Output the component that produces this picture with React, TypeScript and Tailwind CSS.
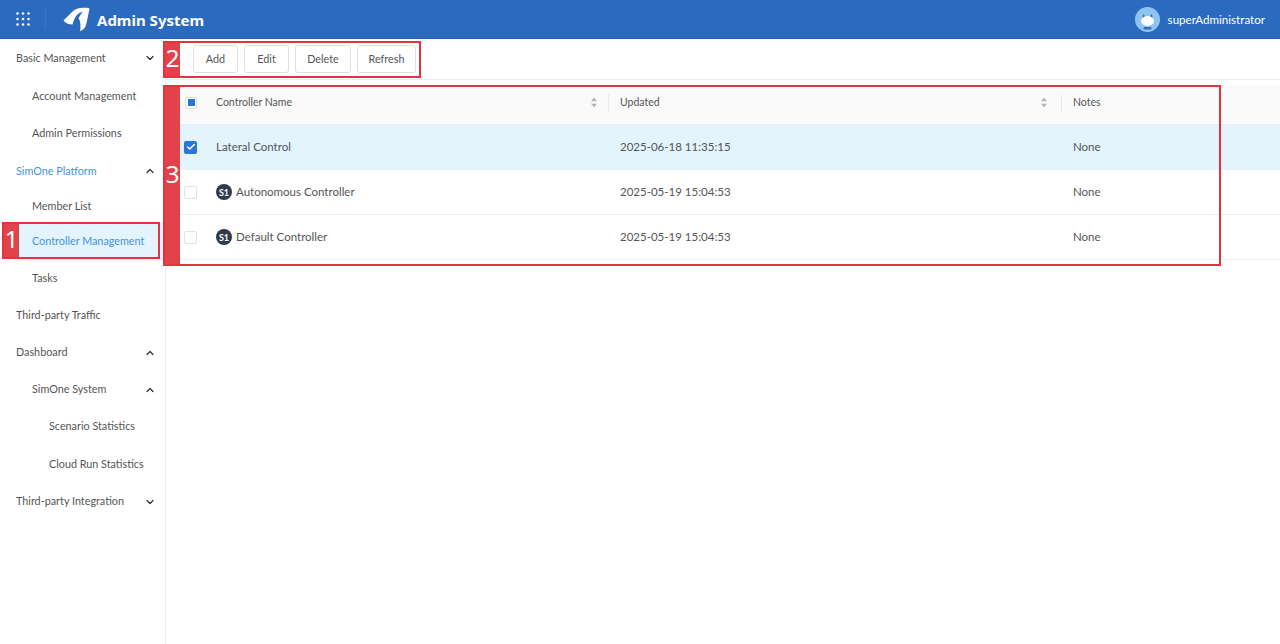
import { Check, ChevronDown, ChevronUp } from "lucide-react"

const menu = [
  { label: "Basic Management", h: "h-[38px]", pl: "pl-4", arrow: "down" },
  { label: "Account Management", h: "h-[38px]", pl: "pl-8" },
  { label: "Admin Permissions", h: "h-[37px]", pl: "pl-8" },
  { label: "SimOne Platform", h: "h-[38px]", pl: "pl-4", arrow: "up", blue: true },
  { label: "Member List", h: "h-[33px]", pl: "pl-8" },
  { label: "Controller Management", h: "h-[37px]", pl: "pl-8", active: true },
  { label: "Tasks", h: "h-[37px]", pl: "pl-8" },
  { label: "Third-party Traffic", h: "h-[37px]", pl: "pl-4" },
  { label: "Dashboard", h: "h-[37px]", pl: "pl-4", arrow: "up" },
  { label: "SimOne System", h: "h-[37px]", pl: "pl-8", arrow: "up" },
  { label: "Scenario Statistics", h: "h-[37px]", pl: "pl-[49px]" },
  { label: "Cloud Run Statistics", h: "h-[38px]", pl: "pl-[49px]" },
  { label: "Third-party Integration", h: "h-[37px]", pl: "pl-4", arrow: "down" },
]

const buttons = [
  { label: "Add", w: "w-[45px]" },
  { label: "Edit", w: "w-[45px]" },
  { label: "Delete", w: "w-[56px]" },
  { label: "Refresh", w: "w-[59px]" },
]

const rows = [
  { name: "Lateral Control", updated: "2025-06-18 11:35:15", selected: true },
  { name: "Autonomous Controller", updated: "2025-05-19 15:04:53", badge: true },
  { name: "Default Controller", updated: "2025-05-19 15:04:53", badge: true },
]

function SortIcon() {
  return (
    <svg width="8" height="11" viewBox="0 0 8 11" className="fill-[#b5b5b5]">
      <path d="M4 0.5 7 4.2H1z" />
      <path d="M4 10.5 1 6.8h6z" />
    </svg>
  )
}

function Logo() {
  return (
    <svg width="27" height="24" viewBox="0 0 27 24" className="fill-white">
      <path d="M0.5 13.5 9 5C13 1.5 17 .3 25.5 1 26.3 1.1 26.5 2 26.3 3 25 8 24.5 13 23 18 22 21 20 23.5 17 24 18 19 17.5 14 15.5 11.5 17 8 18.5 6.5 19.5 5 15 5.5 12 9 9.5 17.5 6.5 17.5 3 16.5 0.5 13.5Z" />
    </svg>
  )
}

function Avatar() {
  return (
    <div className="relative flex h-[25px] w-[25px] items-center justify-center overflow-hidden rounded-full bg-[#8fc3f2]">
      <svg width="25" height="25" viewBox="0 0 25 25">
        <path d="M8 7l2.5 2.5h4L17 7l.6 4H7.4z" className="fill-[#2f6fbd]" />
        <ellipse cx="12.5" cy="14" rx="6.5" ry="5" className="fill-white" />
        <rect x="8.5" y="20" width="8" height="2.5" rx="1" className="fill-[#2f6fbd]" />
      </svg>
    </div>
  )
}

function Annotation({ n, className }: { n: string; className: string }) {
  return (
    <div className={`pointer-events-none absolute border-2 border-[#e2343e] ${className}`}>
      <div className="absolute top-0 bottom-0 left-0 flex w-[15px] items-center justify-center bg-[#e2434b] pb-[3px] font-['Noto_Sans',sans-serif] text-[24px] leading-none text-white">
        {n}
      </div>
    </div>
  )
}

export default function App() {
  return (
    <div className="relative flex h-[644px] w-[1280px] flex-col overflow-hidden bg-white font-['Lato','Noto_Sans',sans-serif] text-[11.5px] text-[#555]">
      <header className="flex h-[39px] shrink-0 items-center justify-between border-b border-[#2560ab] bg-[#2a6bbf] pr-[15px] text-white">
        <div className="flex items-center">
          <svg width="14" height="14" viewBox="0 0 14 14" className="ml-4 fill-white">
            {[1.5, 7, 12.5].flatMap((y) =>
              [1.5, 7, 12.5].map((x) => <circle key={`${x}-${y}`} cx={x} cy={y} r="1.3" />),
            )}
          </svg>
          <div className="ml-[15px] h-[20px] w-px bg-[#3a76c4]" />
          <div className="ml-[17px] flex">
            <Logo />
          </div>
          <span className="mt-[2px] ml-[7px] font-['Noto_Sans',sans-serif] text-[15px] font-bold">Admin System</span>
        </div>
        <div className="flex items-center gap-2">
          <Avatar />
          <span className="mt-[1px] text-[11.6px]">superAdministrator</span>
        </div>
      </header>

      <div className="flex min-h-0 flex-1">
        <aside className="w-[166px] shrink-0 border-r border-[#ececec] text-[10.8px]">
          {menu.map((item) => (
            <div key={item.label} className={`flex items-center pr-[9px] ${item.h} ${item.active ? "ml-[19px] pl-[13px] bg-[#e3f4fd] text-[#3f93e4]" : item.pl} ${item.blue ? "text-[#3f93e4]" : ""}`}>
              <span className="flex-1 whitespace-nowrap">{item.label}</span>
              {item.arrow === "down" && <ChevronDown size={12} strokeWidth={2.5} className="text-[#333]" />}
              {item.arrow === "up" && <ChevronUp size={12} strokeWidth={2.5} className="text-[#333]" />}
            </div>
          ))}
        </aside>

        <main className="min-w-0 flex-1">
          <div className="flex h-[41px] items-center gap-[6px] border-b border-[#ececec] pl-[27px] text-[10.8px]">
            {buttons.map((b) => (
              <button key={b.label} className={`h-[28px] rounded-[3px] border border-[#e0e0e0] bg-white text-[#555] ${b.w}`}>
                {b.label}
              </button>
            ))}
          </div>

          <div className="mt-[5px]">
            <div className="grid h-[40px] grid-cols-[50px_393px_453px_1fr] items-center border-b border-[#ececec] bg-[#fafafa] pb-[4px] text-[10.5px]">
              <div className="pl-[19px]">
                <div className="flex h-[12px] w-[12px] items-center justify-center rounded-[2px] border border-[#e0e0e0] bg-white">
                  <div className="h-[7px] w-[7px] bg-[#2a76d8]" />
                </div>
              </div>
              <div className="flex h-[18px] items-center justify-between border-r border-[#eaeaea] pr-[10px]">
                Controller Name
                <SortIcon />
              </div>
              <div className="flex h-[18px] items-center justify-between border-r border-[#eaeaea] pr-[13px] pl-[11px]">
                Updated
                <SortIcon />
              </div>
              <div className="pl-[11px]">Notes</div>
            </div>
            {rows.map((row) => (
              <div key={row.name} className={`grid h-[45px] grid-cols-[50px_393px_453px_1fr] items-center border-b border-[#efefef] ${row.selected ? "bg-[#e3f4fd]" : ""}`}>
                <div className="pl-[18px]">
                  {row.selected ? (
                    <div className="flex h-[13px] w-[13px] items-center justify-center rounded-[2px] bg-[#2a76d8] text-white">
                      <Check size={10} strokeWidth={3.5} />
                    </div>
                  ) : (
                    <div className="h-[13px] w-[13px] rounded-[2px] border border-[#e3e3e3] bg-white" />
                  )}
                </div>
                <div className="flex items-center gap-1">
                  {row.badge && (
                    <span className="flex h-[16px] w-[16px] items-center justify-center rounded-full bg-[#2f3b4c] text-[9px] leading-none font-bold text-white">
                      S1
                    </span>
                  )}
                  {row.name}
                </div>
                <div className="pl-[11px]">{row.updated}</div>
                <div className="pl-[11px]">None</div>
              </div>
            ))}
          </div>
        </main>
      </div>

      <Annotation n="1" className="top-[222px] left-[2px] h-[37px] w-[158px]" />
      <Annotation n="2" className="top-[41px] left-[163px] h-[37px] w-[258px]" />
      <Annotation n="3" className="top-[85px] left-[163px] h-[181px] w-[1058px]" />
    </div>
  )
}
